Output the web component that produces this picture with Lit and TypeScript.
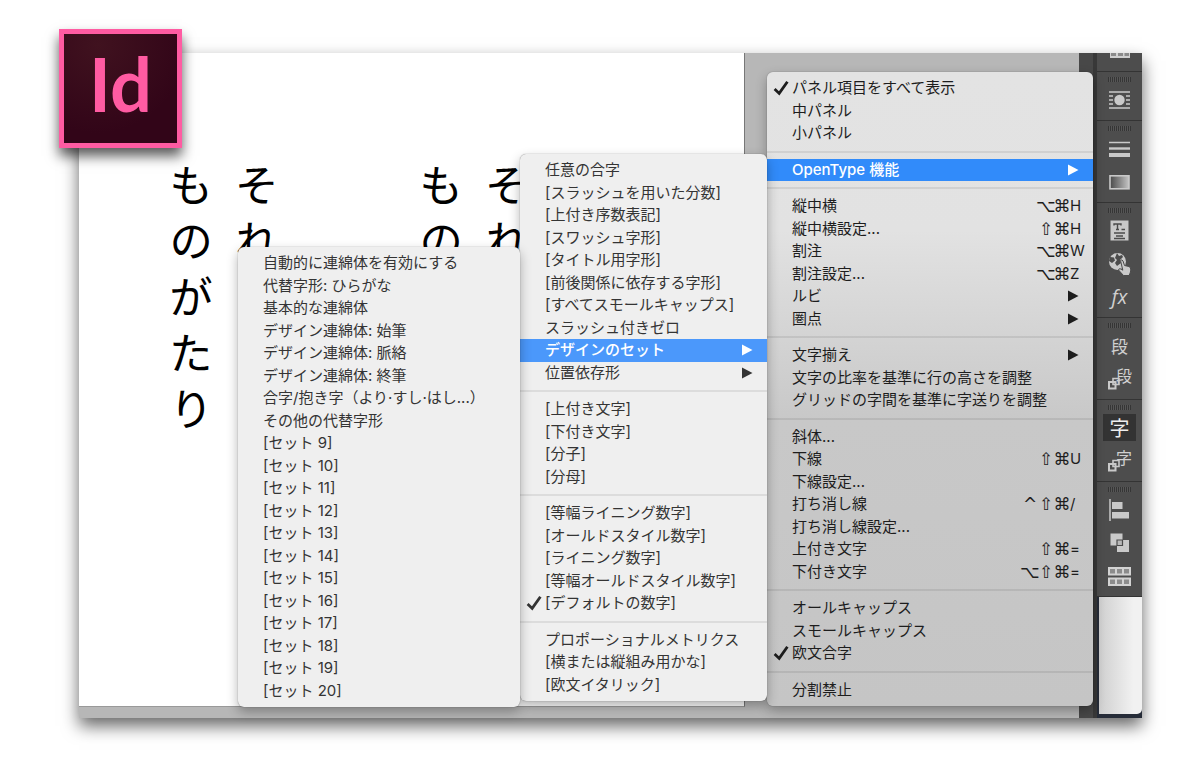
import { LitElement, html, css, svg, nothing } from "lit";
import { customElement, property } from "lit/decorators.js";

interface MenuEntry {
  label: string;
  checked?: boolean;
  submenu?: boolean;
  active?: boolean;
  mods?: string;
  key?: string;
}

const it = (label: string, extra: Partial<MenuEntry> = {}): MenuEntry => ({ label, ...extra });

const panelMenu: MenuEntry[][] = [
  [it("パネル項目をすべて表示", { checked: true }), it("中パネル"), it("小パネル")],
  [it("OpenType 機能", { submenu: true, active: true })],
  [
    it("縦中横", { mods: "⌥⌘", key: "H" }),
    it("縦中横設定...", { mods: "⇧⌘", key: "H" }),
    it("割注", { mods: "⌥⌘", key: "W" }),
    it("割注設定...", { mods: "⌥⌘", key: "Z" }),
    it("ルビ", { submenu: true }),
    it("圏点", { submenu: true }),
  ],
  [
    it("文字揃え", { submenu: true }),
    it("文字の比率を基準に行の高さを調整"),
    it("グリッドの字間を基準に字送りを調整"),
  ],
  [
    it("斜体..."),
    it("下線", { mods: "⇧⌘", key: "U" }),
    it("下線設定..."),
    it("打ち消し線", { mods: "^⇧⌘", key: "/" }),
    it("打ち消し線設定..."),
    it("上付き文字", { mods: "⇧⌘", key: "=" }),
    it("下付き文字", { mods: "⌥⇧⌘", key: "=" }),
  ],
  [it("オールキャップス"), it("スモールキャップス"), it("欧文合字", { checked: true })],
  [it("分割禁止")],
];

const openTypeMenu: MenuEntry[][] = [
  [
    it("任意の合字"),
    it("[スラッシュを用いた分数]"),
    it("[上付き序数表記]"),
    it("[スワッシュ字形]"),
    it("[タイトル用字形]"),
    it("[前後関係に依存する字形]"),
    it("[すべてスモールキャップス]"),
    it("スラッシュ付きゼロ"),
    it("デザインのセット", { submenu: true, active: true }),
    it("位置依存形", { submenu: true }),
  ],
  [it("[上付き文字]"), it("[下付き文字]"), it("[分子]"), it("[分母]")],
  [
    it("[等幅ライニング数字]"),
    it("[オールドスタイル数字]"),
    it("[ライニング数字]"),
    it("[等幅オールドスタイル数字]"),
    it("[デフォルトの数字]", { checked: true }),
  ],
  [it("プロポーショナルメトリクス"), it("[横または縦組み用かな]"), it("[欧文イタリック]")],
];

const stylisticMenu: MenuEntry[][] = [
  [
    it("自動的に連綿体を有効にする"),
    it("代替字形: ひらがな"),
    it("基本的な連綿体"),
    it("デザイン連綿体: 始筆"),
    it("デザイン連綿体: 脈絡"),
    it("デザイン連綿体: 終筆"),
    it("合字/抱き字（より·すし·はし...）"),
    it("その他の代替字形"),
    ...Array.from({ length: 12 }, (_, i) => it(`[セット ${i + 9}]`)),
  ],
];

@customElement("popup-menu")
class PopupMenu extends LitElement {
  @property({ attribute: false }) groups: MenuEntry[][] = [];
  @property() label = "";

  static styles = css`
    :host {
      display: block;
      box-sizing: border-box;
      padding: 5px 0;
      border-radius: 6px;
      background: #efefef;
      color: #343434;
      box-shadow: 0 0 1px rgba(0, 0, 0, 0.55), 0 5px 12px rgba(0, 0, 0, 0.3);
      font: 400 15px/1.5 Inter, "Noto Sans CJK JP", sans-serif;
    }
    .group + .group::before {
      content: "";
      display: block;
      height: 2px;
      margin: 6px 0;
      background: rgba(0, 0, 0, 0.08);
    }
    .item {
      display: flex;
      align-items: center;
      width: 100%;
      height: 1.5em;
      margin: 0;
      padding: 0 7px 0 0;
      border: 0;
      background: none;
      color: inherit;
      font: inherit;
      text-align: left;
      white-space: nowrap;
    }
    .item.active {
      background: var(--active, #4b98fb);
      color: #fff;
      font-weight: 500;
    }
    .mark {
      flex: none;
      width: 18px;
      height: 16px;
      padding: 0 2px 0 5px;
    }
    .text {
      flex: 1;
    }
    .arrow {
      width: 12px;
      height: 12px;
      margin-right: 7px;
    }
    .keys {
      display: flex;
    }
    .mod,
    .key {
      width: 16px;
    }
    .mod {
      display: flex;
      justify-content: center;
      font-family: "DejaVu Sans", sans-serif;
      font-size: 17px;
      line-height: 22px;
    }
  `;

  render() {
    return this.groups.map(
      (g) => html`<div class="group" role="group" aria-label=${this.label}>
        ${g.map(
          (e) => html`<button class="item ${e.active ? "active" : ""}" type="button" role="menuitem">
            <svg class="mark" viewBox="0 0 18 16" aria-hidden="true">
              ${e.checked
                ? svg`<path d="M2.600 9 7.200 13.400 15.400 1.800" fill="none" stroke="currentColor" stroke-width="2.800"/>`
                : nothing}
            </svg>
            <span class="text">${e.label}</span>
            ${e.submenu
              ? html`<svg class="arrow" viewBox="0 0 12 12" aria-hidden="true"><path d="M1 0.5 11.5 6 1 11.5Z" fill="currentColor" /></svg>`
              : nothing}
            ${e.key
              ? html`<span class="keys">${[...(e.mods ?? "")].map((m) => html`<span class="mod">${m}</span>`)}<span class="key">${e.key}</span></span>`
              : nothing}
          </button>`
        )}
      </div>`
    );
  }
}

const squares = svg`<path d="M5 9.500h6v6H5z" fill="none" stroke="#c9c9c9" stroke-width="1.600"/><path d="M1 13h6.500v6.500H1z" fill="none" stroke="#c9c9c9" stroke-width="2"/>`;

const icons: Record<string, unknown> = {
  wrap: svg`<path d="M1 4h21M1 8h4M18 8h4M1 12h4M18 12h4M1 16h4M18 16h4M1 20h21" stroke="#c9c9c9" stroke-width="1.6"/><circle cx="11.5" cy="12" r="5.2" fill="#c9c9c9"/>`,
  stroke: svg`<path d="M1 5.5h21" stroke="#c9c9c9" stroke-width="1.5"/><path d="M1 11.5h21" stroke="#c9c9c9" stroke-width="2.4"/><path d="M1 18h21" stroke="#c9c9c9" stroke-width="4"/>`,
  gradient: svg`<defs><linearGradient id="g"><stop offset="0" stop-color="#4a4a4a"/><stop offset="1" stop-color="#c4c4c4"/></linearGradient></defs><rect x="2" y="5.8" width="19" height="13" fill="url(#g)" stroke="#c9c9c9" stroke-width="1.6"/>`,
  article: svg`<path d="M2.5 1.5h18v20h-18z" fill="#c9c9c9"/><path d="M6 6.500V5h7v1.500M9.500 5v5.400M8 10.500h3M13.500 10.500H17M6 14h11M8 17h7M6 19.500h11" fill="none" stroke="#4b4b4b" stroke-width="1.4"/>`,
  globe: svg`<circle cx="9.500" cy="9.500" r="8.500" fill="#c9c9c9"/><path d="M2 5l4 .5 1 3-3 2.500-3-2M9 1l2 3 3-1 1 2-3 3 1 3-4 3-2-3 2-3-2-2z" fill="#4b4b4b"/><path d="M12.500 8.500q1.500-1.500 2.500.5l1.500 4.500 4.500 1q2 1 1.800 3.500l-.6 3-1.200 2.500h-5.500l-5-5.500q.3-2 2.500-1l1.800 1.200z" fill="#c9c9c9" stroke="#4b4b4b"/>`,
  align: svg`<path d="M2 1v22" stroke="#c9c9c9" stroke-width="1.5"/><path d="M4 4h10.500v7H4zM4 14h17v6.500H4z" fill="#c9c9c9"/>`,
  pathfinder: svg`<path d="M2.500 2.500h12v12h-12zM9 9h12v12H9z" fill="#c9c9c9"/><path d="M9 9h5.500v5.500H9z" fill="#b8b8b8" stroke="#4b4b4b" stroke-width="1.2"/>`,
  table: svg`<path d="M0 3h23v8.500H0zM0 13.500h23V22H0z" fill="#d2d2d2"/><path d="M2 5h5v4.500H2zM9 5h5v4.500H9zM16 5h5v4.500h-5zM2 15.500h5V20H2zM9 15.500h5V20H9zM16 15.500h5V20h-5z" fill="#8c8c8c"/>`,
  squares,
};

interface Tool {
  icon?: string;
  text?: string;
  name: string;
  kind?: string;
}

const dock: Tool[][] = [
  [{ icon: "wrap", name: "テキストの回り込み" }],
  [{ icon: "stroke", name: "線" }, { icon: "gradient", name: "グラデーション" }],
  [
    { icon: "article", name: "アーティクル" },
    { icon: "globe", name: "ハイパーリンク" },
    { text: "fx", name: "効果", kind: "fx" },
  ],
  [
    { text: "段", name: "段落" },
    { text: "段", icon: "squares", name: "段落スタイル", kind: "style" },
  ],
  [
    { text: "字", name: "文字", kind: "on" },
    { text: "字", icon: "squares", name: "文字スタイル", kind: "style" },
  ],
  [
    { icon: "align", name: "整列" },
    { icon: "pathfinder", name: "パスファインダー" },
    { icon: "table", name: "表" },
  ],
];

@customElement("tool-dock")
class ToolDock extends LitElement {
  static styles = css`
    :host {
      display: block;
      background: #4d4d4d;
      border-bottom: 1px solid #333;
      box-sizing: border-box;
    }
    .head {
      height: 18px;
      display: flex;
      justify-content: center;
    }
    .cut {
      width: 20px;
      height: 5px;
    }
    .section {
      border-top: 1px solid #343434;
      padding: 5px 0 4px;
      display: flex;
      flex-direction: column;
      align-items: center;
    }
    .grip {
      width: 23px;
      height: 5px;
      margin-bottom: 1px;
      background: repeating-linear-gradient(90deg, #353535 0 1px, #565656 1px 2px);
    }
    .tool {
      position: relative;
      box-sizing: border-box;
      width: 33px;
      height: 33px;
      display: flex;
      align-items: center;
      justify-content: center;
      margin: 0;
      padding: 0;
      border: 3px solid transparent;
      border-width: 3px 0;
      background: none;
      background-clip: padding-box;
      color: #d0d0d0;
      font: 400 17px/24px "Noto Sans CJK JP", sans-serif;
    }
    .tool.on {
      background-color: #333;
      color: #eee;
      font-size: 20px;
    }
    .tool.fx {
      font: italic 400 20px/24px "Open Sans", sans-serif;
    }
    .tool.style {
      padding: 0 0 0 9px;
      align-items: flex-start;
      font-size: 16px;
      line-height: 20px;
    }
    .icon {
      width: 23px;
      height: 24px;
    }
    .style .icon {
      position: absolute;
      left: 5px;
      top: 4px;
      overflow: visible;
    }
  `;

  render() {
    return html`
      <div class="head">
        <svg class="cut" viewBox="0 0 20 5" aria-hidden="true">
          <path d="M0 0h20v5H0z" fill="#cfcfcf" />
          <path d="M1 0h5v3H1zM8 0h5v3H8zM14.500 0h4.500v3h-4.500z" fill="#8a8a8a" />
        </svg>
      </div>
      ${dock.map(
        (s) => html`<div class="section">
          <div class="grip"></div>
          ${s.map(
            (t) => html`<button class="tool ${t.kind ?? ""}" type="button" aria-label=${t.name}>
              ${t.text ?? nothing}
              ${t.icon ? html`<svg class="icon" viewBox="0 0 23 24" aria-hidden="true">${icons[t.icon]}</svg>` : nothing}
            </button>`
          )}
        </div>`
      )}
    `;
  }
}

@customElement("app-root")
class AppRoot extends LitElement {
  static styles = css`
    :host {
      display: block;
      box-sizing: border-box;
      min-height: 100vh;
      padding: 53px 58px 52px 79px;
      background: #fff;
      overflow: hidden;
    }
    .window {
      position: relative;
      display: flex;
      min-height: calc(100vh - 105px);
      background: #b7b7b7;
      box-shadow: 0 8px 16px rgba(0, 0, 0, 0.6);
    }
    .board {
      flex: 1;
      display: flex;
      padding: 0 334px 11px 0;
    }
    .page {
      flex: 1;
      box-sizing: border-box;
      display: flex;
      align-items: flex-start;
      gap: 118px;
      padding: 104px 0 0 79px;
      background: #fff;
      border-right: 1px solid #777;
      border-bottom: 1px solid #999;
      overflow: hidden;
    }
    .verse {
      flex: none;
      margin: 0;
      writing-mode: vertical-rl;
      font: 400 44px/66px "Noto Sans CJK JP", sans-serif;
      color: #000;
    }
    .line {
      display: flex;
    }
    .kana {
      height: 56px;
      display: flex;
      align-items: center;
      justify-content: center;
    }
    .gutter {
      width: 18px;
      box-sizing: border-box;
      background: #484848;
      border-right: 4px solid #383838;
    }
    .side {
      width: 45px;
      display: flex;
      flex-direction: column;
      background: #262c38;
      padding-bottom: 4px;
    }
    .behind {
      flex: 1;
      background: linear-gradient(90deg, #cfcfcf, #f1f1f1 80%);
      border-radius: 0 0 5px 0;
      margin-left: 2px;
    }
    .menu {
      position: absolute;
    }
    .panel {
      top: 19px;
      right: 49px;
      width: 326px;
      background: linear-gradient(#e3e3e3 0, #e2e2e2 25%, #c8c8c8 55%, #c5c5c5);
      color: #1d1d1d;
      --active: #318bfa;
    }
    .opentype {
      top: 101px;
      right: 375px;
      width: 247px;
    }
    .stylistic {
      top: 194px;
      right: 622px;
      width: 282px;
    }
    .logo {
      position: absolute;
      left: -20px;
      top: -24px;
      width: 123px;
      height: 119px;
      box-sizing: border-box;
      display: flex;
      justify-content: center;
      border: 5px solid #ff5ba2;
      background: radial-gradient(circle at 30% 10%, #40121f, #320518 70%);
      color: #ff5ba2;
      box-shadow: 0 8px 12px rgba(0, 0, 0, 0.65);
      font: 700 74px/100px Lato, sans-serif;
    }
  `;

  private verse(lines: string[]) {
    return html`<p class="verse" lang="ja">
      ${lines.map((l) => html`<span class="line">${[...l].map((c) => html`<span class="kana">${c}</span>`)}</span>`)}
    </p>`;
  }

  render() {
    return html`
      <main class="window">
        <div class="board">
          <div class="page">${this.verse(["それ", "ものがたり"])} ${this.verse(["それ", "もの"])}</div>
        </div>
        <div class="gutter"></div>
        <div class="side">
          <tool-dock></tool-dock>
          <div class="behind"></div>
        </div>
        <popup-menu class="menu panel" role="menu" label="文字パネル" .groups=${panelMenu}></popup-menu>
        <popup-menu class="menu opentype" role="menu" label="OpenType 機能" .groups=${openTypeMenu}></popup-menu>
        <popup-menu class="menu stylistic" role="menu" label="デザインのセット" .groups=${stylisticMenu}></popup-menu>
        <div class="logo">Id</div>
      </main>
    `;
  }
}
